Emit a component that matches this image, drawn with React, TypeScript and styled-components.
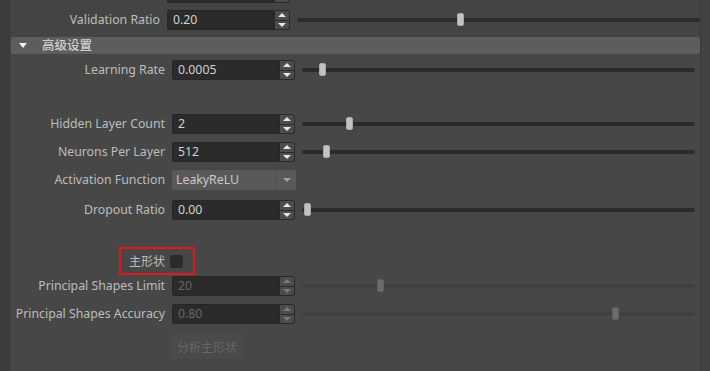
import * as React from "react";
import styled, { createGlobalStyle } from "styled-components";

const GlobalStyle = createGlobalStyle`
  html, body {
    margin: 0;
    padding: 0;
    background: #444444;
    overflow: hidden;
  }
  body {
    font-family: "Noto Sans", "Noto Sans CJK SC", sans-serif;
    font-size: 12px;
    color: #bdbdbd;
  }
`;

type SliderRow = {
  label: string;
  value: string;
  pos: number;
  disabled?: boolean;
};

const trainRows: SliderRow[] = [
  { label: "Hidden Layer Count", value: "2", pos: 0.114 },
  { label: "Neurons Per Layer", value: "512", pos: 0.055 },
];

const shapeRows: SliderRow[] = [
  { label: "Principal Shapes Limit", value: "20", pos: 0.195, disabled: true },
  { label: "Principal Shapes Accuracy", value: "0.80", pos: 0.803, disabled: true },
];

function SpinField({ value, disabled }: { value: string; disabled?: boolean }) {
  return (
    <Spin>
      <SpinInput $disabled={disabled}>{value}</SpinInput>
      <SpinButtons>
        <SpinButton $top>
          <Arrow $up $disabled={disabled} />
        </SpinButton>
        <SpinButton>
          <Arrow $disabled={disabled} />
        </SpinButton>
      </SpinButtons>
    </Spin>
  );
}

function Slider({ pos, disabled }: { pos: number; disabled?: boolean }) {
  return (
    <Track $disabled={disabled}>
      <Thumb $disabled={disabled} style={{ left: `calc((100% - 7px) * ${pos})` }} />
    </Track>
  );
}

export default function App() {
  return (
    <>
      <GlobalStyle />
      <Window>
        <Edge />
        <Main>
          <TopRow>
            <Label />
            <SpinField value="" />
          </TopRow>
          <TopRow $mt={7}>
            <Label>Validation Ratio</Label>
            <SpinField value="0.20" />
            <Slider pos={0.405} />
          </TopRow>
          <Header>
            <Caret />
            <HeaderText>高级设置</HeaderText>
          </Header>
          <Body>
            <Row $mt={6}>
              <Label>Learning Rate</Label>
              <SpinField value="0.0005" />
              <Slider pos={0.044} />
            </Row>
            {trainRows.map((r, i) => (
              <Row key={r.label} $mt={i === 0 ? 34 : 8}>
                <Label>{r.label}</Label>
                <SpinField value={r.value} />
                <Slider pos={r.pos} />
              </Row>
            ))}
            <Row $mt={8}>
              <Label>Activation Function</Label>
              <Combo>
                <ComboText>LeakyReLU</ComboText>
                <ComboArrow>
                  <Arrow $gray />
                </ComboArrow>
              </Combo>
            </Row>
            <Row $mt={10}>
              <Label>Dropout Ratio</Label>
              <SpinField value="0.00" />
              <Slider pos={0.005} />
            </Row>
            <CheckRow>
              <Highlight>
                <CheckLabel>主形状</CheckLabel>
                <CheckBox />
              </Highlight>
            </CheckRow>
            {shapeRows.map((r, i) => (
              <Row key={r.label} $mt={i === 0 ? 1 : 8}>
                <Label>{r.label}</Label>
                <SpinField value={r.value} disabled={r.disabled} />
                <Slider pos={r.pos} disabled={r.disabled} />
              </Row>
            ))}
            <ButtonRow>
              <ActionButton disabled>分析主形状</ActionButton>
            </ButtonRow>
          </Body>
        </Main>
        <Edge $right />
      </Window>
    </>
  );
}

const Window = styled.div`
  display: flex;
  width: 710px;
  height: 371px;
  overflow: hidden;
  background: #444444;
`;

const Edge = styled.div<{ $right?: boolean }>`
  width: 10px;
  flex: none;
  background: ${(p) => (p.$right ? "#424242" : "#3d3d3d")};
  border-${(p) => (p.$right ? "left" : "right")}: 1px solid #3a3a3a;
  box-sizing: border-box;
`;

const Main = styled.div`
  flex: 1;
  display: flex;
  flex-direction: column;
  min-width: 0;
`;

const TopRow = styled.div<{ $mt?: number }>`
  display: grid;
  grid-template-columns: 150px 123px 1fr;
  column-gap: 7px;
  align-items: center;
  height: 20px;
  margin-top: ${(p) => (p.$mt === undefined ? "-17px" : `${p.$mt}px`)};
`;

const Row = styled.div<{ $mt: number }>`
  display: grid;
  grid-template-columns: 154px 123px 1fr;
  column-gap: 7px;
  align-items: center;
  height: 20px;
  margin-top: ${(p) => p.$mt}px;
  padding-right: 5px;
`;

const Label = styled.div`
  text-align: right;
  white-space: nowrap;
  color: #bdbdbd;
  font-size: 12.3px;
  line-height: 20px;
`;

const Spin = styled.div`
  display: flex;
  height: 20px;
`;

const SpinInput = styled.div<{ $disabled?: boolean }>`
  flex: 1;
  box-sizing: border-box;
  height: 20px;
  background: #2b2b2b;
  border: 1px solid #262626;
  border-radius: 2px 0 0 2px;
  padding-left: 5px;
  line-height: 18px;
  font-size: 12.3px;
  color: ${(p) => (p.$disabled ? "#666666" : "#d2d2d2")};
`;

const SpinButtons = styled.div`
  width: 16px;
  display: flex;
  flex-direction: column;
`;

const SpinButton = styled.div<{ $top?: boolean }>`
  flex: 1;
  display: flex;
  align-items: center;
  justify-content: center;
  box-sizing: border-box;
  background: #4c4c4c;
  border: 1px solid #2a2a2a;
  border-top: ${(p) => (p.$top ? "1px solid #2a2a2a" : "none")};
  border-radius: ${(p) => (p.$top ? "0 3px 0 0" : "0 0 3px 0")};
`;

const Arrow = styled.span<{ $up?: boolean; $disabled?: boolean; $gray?: boolean }>`
  width: 0;
  height: 0;
  border-left: 4px solid transparent;
  border-right: 4px solid transparent;
  ${(p) => (p.$up ? "border-bottom" : "border-top")}: 4px solid
    ${(p) => (p.$gray ? "#a0a0a0" : p.$disabled ? "#7a7a7a" : "#e6e6e6")};
`;

const Track = styled.div<{ $disabled?: boolean }>`
  position: relative;
  height: 4px;
  border-radius: 2px;
  background: ${(p) => (p.$disabled ? "#404040" : "#2b2b2b")};
`;

const Thumb = styled.div<{ $disabled?: boolean }>`
  position: absolute;
  top: -5px;
  width: 7px;
  height: 13px;
  box-sizing: border-box;
  border-radius: 2px;
  background: ${(p) => (p.$disabled ? "#6b6b6b" : "#c2c2c2")};
  border: 1px solid ${(p) => (p.$disabled ? "#616161" : "#a8a8a8")};
`;

const Header = styled.div`
  display: flex;
  align-items: center;
  height: 17px;
  margin-top: 7px;
  margin-left: 1px;
  background: #5d5d5d;
  border-radius: 2px;
`;

const Caret = styled.span`
  margin-left: 8px;
  width: 0;
  height: 0;
  border-left: 4px solid transparent;
  border-right: 4px solid transparent;
  border-top: 5px solid #f0f0f0;
`;

const HeaderText = styled.span`
  margin-left: 15px;
  font-size: 12.5px;
  font-weight: 500;
  color: #cfcfcf;
  line-height: 17px;
`;

const Body = styled.div`
  flex: 1;
  margin-left: 1px;
  background: #474747;
  display: flex;
  flex-direction: column;
`;

const Combo = styled.div`
  display: flex;
  height: 20px;
  width: 124px;
  background: #595959;
  border-radius: 2px;
`;

const ComboText = styled.div`
  flex: 1;
  padding-left: 4px;
  line-height: 20px;
  font-size: 12.3px;
  color: #c8c8c8;
  border-right: 1px solid #4e4e4e;
`;

const ComboArrow = styled.div`
  width: 19px;
  display: flex;
  align-items: center;
  justify-content: center;
`;

const CheckRow = styled.div`
  display: flex;
  margin-top: 27px;
  padding-left: 108px;
`;

const Highlight = styled.div`
  display: flex;
  align-items: center;
  box-sizing: border-box;
  width: 76px;
  height: 28px;
  border: 2px solid #e4151f;
  padding-left: 8px;
`;

const CheckLabel = styled.span`
  font-size: 12px;
  color: #bdbdbd;
`;

const CheckBox = styled.span`
  margin-left: 5px;
  width: 13px;
  height: 13px;
  border-radius: 2px;
  background: #2b2b2b;
`;

const ButtonRow = styled.div`
  display: flex;
  margin-top: 10px;
  padding-left: 159px;
`;

const ActionButton = styled.button`
  width: 74px;
  height: 25px;
  padding: 0;
  border: none;
  border-radius: 2px;
  background: #4a4a4a;
  color: #666666;
  font-family: "Noto Sans CJK SC", sans-serif;
  font-size: 12px;
`;
